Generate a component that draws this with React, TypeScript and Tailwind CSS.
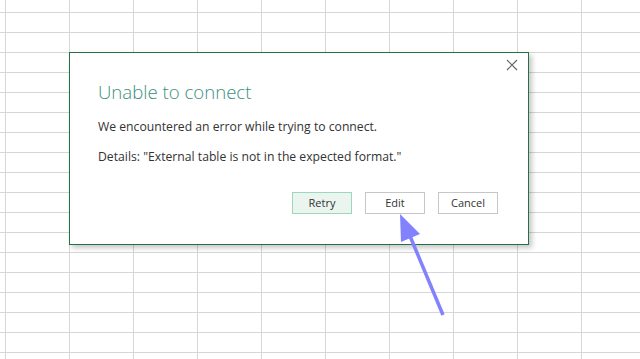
import React from "react";

const font = { fontFamily: '"Open Sans", "Noto Sans", Arial, sans-serif' };

function DialogButton({ label, primary }: { label: string; primary?: boolean }) {
  return (
    <button
      className={
        primary
          ? "h-[22px] w-[60px] border border-[#9fd7bb] bg-[#eaf5ef] text-[11px] text-[#333]"
          : "h-[22px] w-[60px] border border-[#c6c6c6] bg-white text-[11px] text-[#333]"
      }
    >
      {label}
    </button>
  );
}

export default function App() {
  return (
    <div
      className="relative h-[359px] w-[640px] overflow-hidden bg-white bg-[linear-gradient(to_right,#d6d6d6_1px,transparent_1px),linear-gradient(to_bottom,#d6d6d6_1px,transparent_1px)] bg-[size:64px_20px] bg-[position:5px_12px]"
      style={font}
    >
      <div className="absolute left-[69px] top-[52px] flex h-[193px] w-[460px] flex-col border border-[#217346] bg-white shadow-[3px_3px_5px_rgba(0,0,0,0.22)]">
        <div className="flex justify-end pr-[10px] pt-[6px]">
          <svg width="12" height="12" viewBox="0 0 12 12" className="text-[#666]">
            <path d="M1 1 L11 11 M11 1 L1 11" stroke="currentColor" strokeWidth="1.2" fill="none" />
          </svg>
        </div>
        <div className="px-[28px] pt-[8px]">
          <h1 className="text-[18.6px] font-light leading-[26px] text-[#3a8f7d]">Unable to connect</h1>
          <p className="mt-[13px] text-[12.2px] leading-[18px] text-[#333]">
            We encountered an error while trying to connect.
          </p>
          <p className="mt-[12px] text-[12.2px] leading-[18px] text-[#333]">
            Details: "External table is not in the expected format."
          </p>
        </div>
        <div className="mt-auto flex justify-end gap-[13px] pb-[30px] pr-[30px]">
          <DialogButton label="Retry" primary />
          <DialogButton label="Edit" />
          <DialogButton label="Cancel" />
        </div>
      </div>
      <svg className="absolute left-0 top-0" width="640" height="359" viewBox="0 0 640 359">
        <line x1="443" y1="315" x2="410" y2="236" stroke="#8282ff" strokeWidth="3.5" />
        <polygon points="400,214 401,242 420,234" fill="#8282ff" />
      </svg>
    </div>
  );
}
